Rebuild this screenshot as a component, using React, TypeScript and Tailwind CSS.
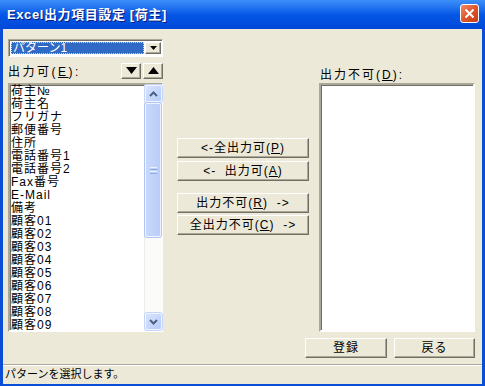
import React from 'react';

const items = [
  '荷主№',
  '荷主名',
  'フリガナ',
  '郵便番号',
  '住所',
  '電話番号1',
  '電話番号2',
  'Fax番号',
  'E-Mail',
  '備考',
  '顧客01',
  '顧客02',
  '顧客03',
  '顧客04',
  '顧客05',
  '顧客06',
  '顧客07',
  '顧客08',
  '顧客09',
];

function ClassicButton({ children, className }: { children: React.ReactNode; className: string }) {
  return (
    <button
      className={`flex items-center justify-center bg-[#ece9d8] border border-t-white border-l-white border-r-[#716f64] border-b-[#716f64] shadow-[inset_-1px_-1px_0_#aca899] text-[12px] leading-none text-black ${className}`}
    >
      {children}
    </button>
  );
}

function Key({ k }: { k: string }) {
  return <span className="underline underline-offset-1">{k}</span>;
}

function ScrollArrow({ up }: { up: boolean }) {
  return (
    <div className="h-[17px] w-[17px] flex items-center justify-center rounded-[2px] bg-gradient-to-br from-[#d9e4fe] to-[#b7cbf9] border border-[#eef3fe] shadow-[0_0_0_1px_#c6d6fb]">
      <svg width="9" height="6" viewBox="0 0 9 6">
        <path
          d={up ? 'M1 5 L4.5 1.5 L8 5' : 'M1 1 L4.5 4.5 L8 1'}
          stroke="#4d6185"
          strokeWidth="2"
          fill="none"
        />
      </svg>
    </div>
  );
}

export default function App() {
  return (
    <div className="w-[485px] h-[386px] flex flex-col bg-[#0a4ed8] font-['Liberation_Sans','Noto_Sans_CJK_JP',sans-serif] overflow-hidden">
      {/* title bar */}
      <div className="h-[29px] shrink-0 flex items-center justify-between pl-[7px] pr-[6px] bg-gradient-to-b from-[#3d8ffa] via-[#0657e6] to-[#0048d8]">
        <span className="text-white font-bold text-[13px] tracking-[0.6px] [text-shadow:1px_1px_0_#0a1a7a]">
          Excel出力項目設定 [荷主]
        </span>
        <div className="w-[19px] h-[19px] mt-[-2px] rounded-[3px] border border-white bg-gradient-to-br from-[#f08a66] via-[#e0542e] to-[#c53b16] flex items-center justify-center">
          <svg width="11" height="11" viewBox="0 0 11 11">
            <path d="M1.5 1.5 L9.5 9.5 M9.5 1.5 L1.5 9.5" stroke="white" strokeWidth="2" />
          </svg>
        </div>
      </div>

      {/* body */}
      <div className="flex-1 mx-[3px] bg-[#ece9d8] flex flex-col text-black">
        <div className="flex-1 flex flex-col pl-[5px] pr-[7px] pt-[10px] pb-[6px]">
          <div className="flex">
            {/* left column */}
            <div className="w-[155px] flex flex-col">
              <div className="h-[18px] flex border border-t-[#aca899] border-l-[#aca899] border-r-white border-b-white shadow-[inset_1px_1px_0_#716f64] bg-white p-[2px] pr-[1px]">
                <div className="flex-1 bg-[#316ac5] border border-dotted border-[#c9d6ef] text-white text-[12px] leading-[10px] pl-[1px] flex items-center">
                  パターン1
                </div>
                <ClassicButton className="w-[16px] h-[12px] ml-[1px]">
                  <svg width="7" height="4" viewBox="0 0 7 4">
                    <path d="M0 0 H7 L3.5 4 Z" fill="black" />
                  </svg>
                </ClassicButton>
              </div>
              <div className="mt-[5px] h-[17px] flex items-center justify-between">
                <span className="text-[12px] leading-none pt-[2px] tracking-[2.5px]">
                  出力可(<Key k="E" />):
                </span>
                <div className="flex gap-[2px]">
                  <ClassicButton className="w-[20px] h-[16px]">
                    <svg width="11" height="7" viewBox="0 0 11 7">
                      <path d="M0 0 H11 L5.5 7 Z" fill="black" />
                    </svg>
                  </ClassicButton>
                  <ClassicButton className="w-[20px] h-[16px]">
                    <svg width="11" height="7" viewBox="0 0 11 7">
                      <path d="M0 7 H11 L5.5 0 Z" fill="black" />
                    </svg>
                  </ClassicButton>
                </div>
              </div>
              <div className="mt-[4px] h-[249px] flex border-2 border-t-[#aca899] border-l-[#aca899] border-r-white border-b-white shadow-[inset_1px_1px_0_#716f64] bg-white">
                <div className="flex-1 pl-[1px]">
                  {items.map((it) => (
                    <div key={it} className="h-[13px] text-[12px] leading-[13px] tracking-[1px] whitespace-nowrap">
                      {it}
                    </div>
                  ))}
                </div>
                <div className="w-[17px] flex flex-col bg-[#fbfbf9] border-l border-[#eeede5]">
                  <ScrollArrow up={true} />
                  <div className="h-[134px] mt-[1px] rounded-[2px] bg-gradient-to-r from-[#c9d8fc] to-[#b9cdf8] border border-[#eef3fe] shadow-[0_0_0_1px_#b1c6f4] flex items-center justify-center">
                    <div className="flex flex-col gap-[1px]">
                      <div className="w-[7px] h-[1px] bg-[#eef4fe]" />
                      <div className="w-[7px] h-[1px] bg-[#8caae6]" />
                      <div className="w-[7px] h-[1px] bg-[#eef4fe]" />
                      <div className="w-[7px] h-[1px] bg-[#8caae6]" />
                    </div>
                  </div>
                  <div className="flex-1" />
                  <ScrollArrow up={false} />
                </div>
              </div>
            </div>

            {/* middle column */}
            <div className="ml-[14px] w-[132px] flex flex-col pt-[99px] tracking-[1px]">
              <ClassicButton className="h-[20px]">
                &lt;-全出力可(<Key k="P" />)
              </ClassicButton>
              <ClassicButton className="h-[20px] mt-[3px]">
                &lt;-&nbsp;&nbsp;出力可(<Key k="A" />)
              </ClassicButton>
              <ClassicButton className="h-[20px] mt-[12px]">
                出力不可(<Key k="R" />)&nbsp;&nbsp;-&gt;
              </ClassicButton>
              <ClassicButton className="h-[20px] mt-[2px]">
                全出力不可(<Key k="C" />)&nbsp;&nbsp;-&gt;
              </ClassicButton>
            </div>

            {/* right column */}
            <div className="ml-[10px] w-[156px] flex flex-col pt-[28px]">
              <span className="h-[16px] pl-[1px] text-[12px] leading-none pt-[2px] tracking-[2px]">
                出力不可(<Key k="D" />):
              </span>
              <div className="h-[249px] border-2 border-t-[#aca899] border-l-[#aca899] border-r-white border-b-white shadow-[inset_1px_1px_0_#716f64] bg-white" />
            </div>
          </div>

          {/* footer buttons */}
          <div className="mt-[6px] flex justify-end gap-[7px] tracking-[1px]">
            <ClassicButton className="w-[82px] h-[20px]">登録</ClassicButton>
            <ClassicButton className="w-[81px] h-[20px]">戻る</ClassicButton>
          </div>
        </div>

        {/* status bar */}
        <div className="h-[20px] border-t border-[#aca899] shadow-[inset_0_1px_0_white] pl-[2px] flex items-center text-[11px] leading-none">
          パターンを選択します。
        </div>
      </div>
      <div className="h-[3px] shrink-0" />
    </div>
  );
}
